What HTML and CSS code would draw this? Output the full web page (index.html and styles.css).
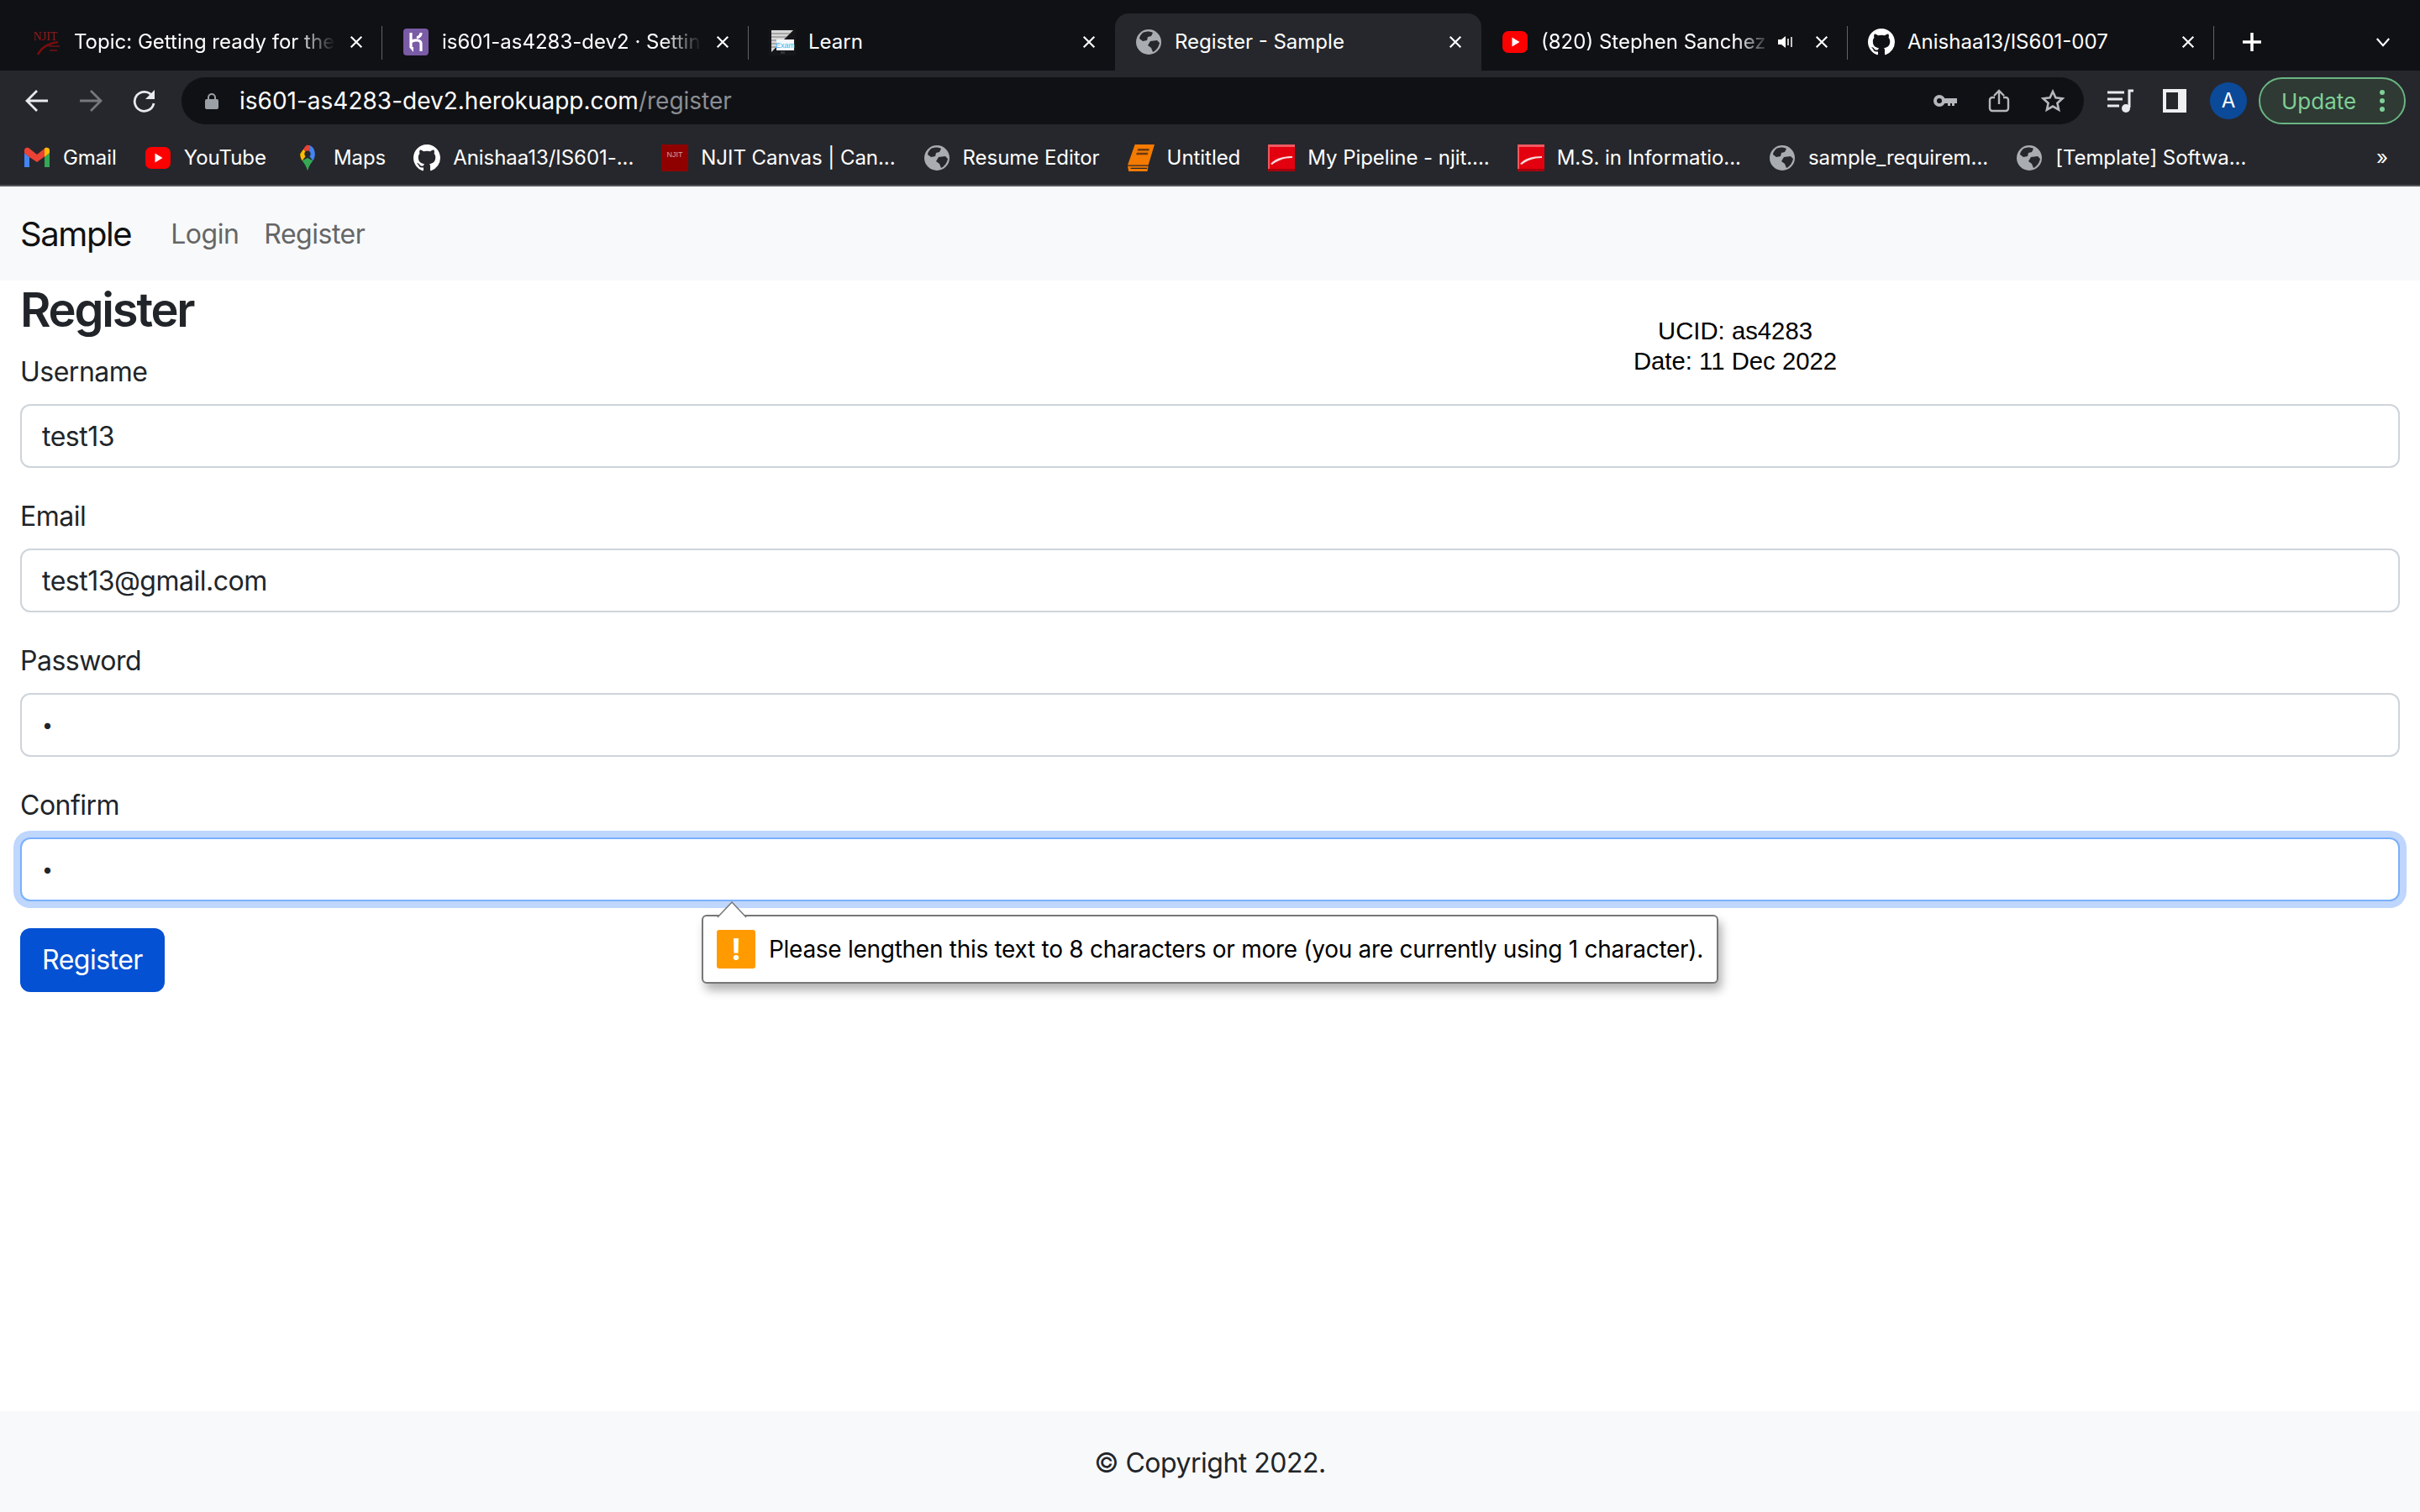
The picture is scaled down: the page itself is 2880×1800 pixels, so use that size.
FILE: index.html
```html
<!DOCTYPE html>
<html lang="en">
<head>
    <meta charset="UTF-8">
    <meta name="viewport" content="width=device-width, initial-scale=1.0">
    <title>Register - Sample</title>
    <link rel="stylesheet" href="styles.css">
</head>
<body>
    <!-- shared icons -->
    <svg class="icon-defs" aria-hidden="true">
        <symbol id="i-github" viewBox="0 0 16 16"><path fill="#fff" d="M8 0C3.58 0 0 3.58 0 8c0 3.54 2.29 6.53 5.47 7.59.4.07.55-.17.55-.38 0-.19-.01-.82-.01-1.49-2.01.37-2.53-.49-2.69-.94-.09-.23-.48-.94-.82-1.13-.28-.15-.68-.52-.01-.53.63-.01 1.08.58 1.23.82.72 1.21 1.87.87 2.33.66.07-.52.28-.87.51-1.07-1.78-.2-3.64-.89-3.64-3.95 0-.87.31-1.59.82-2.15-.08-.2-.36-1.02.08-2.12 0 0 .67-.21 2.2.82.64-.18 1.32-.27 2-.27.68 0 1.36.09 2 .27 1.53-1.04 2.2-.82 2.2-.82.44 1.1.16 1.92.08 2.12.51.56.82 1.27.82 2.15 0 3.07-1.87 3.75-3.65 3.95.29.25.54.73.54 1.48 0 1.07-.01 1.93-.01 2.2 0 .21.15.46.55.38A8.013 8.013 0 0016 8c0-4.42-3.58-8-8-8z"/></symbol>
        <symbol id="i-globe" viewBox="0 0 32 32"><circle cx="16" cy="16" r="15" fill="#a9adb2"/><path fill="#26272c" d="M9 5c4-2 9-2 12 0l-2 4-4 1-1 4-5 1-4-3c0-3 2-5 4-7zM18 15l8-1 3 3c-1 5-4 9-8 11l-2-5-4-3z"/></symbol>
        <symbol id="i-youtube" viewBox="0 0 32 32"><rect x="1" y="3" width="30" height="26" rx="7" fill="#f00"/><path fill="#fff" d="M12.500 10.500l9 5.500-9 5.500z"/></symbol>
        <symbol id="i-pdf" viewBox="0 0 32 32"><rect width="32" height="32" fill="#e3000f"/><rect width="32" height="3" fill="#ee5a60"/><rect width="2" height="32" fill="#ee5a60"/><rect y="29" width="32" height="3" fill="#a8000b"/><path fill="#f8dcdc" d="M3 23c5-6 14-9 26-9v2c-10 0-18 3-24 8z"/></symbol>
        <symbol id="i-close" viewBox="0 0 20 20"><path stroke="#fff" stroke-width="2.400" d="M3 3l14 14M17 3L3 17"/></symbol>
    </svg>

    <!-- browser chrome -->
    <div class="tab-strip">
        <div class="tab">
            <svg class="favicon fav-njit" viewBox="0 0 32 32"><text x="13" y="14" text-anchor="middle" class="njit-mark">NJIT</text><path fill="none" stroke="#7a0d0d" stroke-width="2.500" d="M4 31C9 22 16 18 28 16"/><path stroke="#5c1010" stroke-width="2" d="M17 21h13M18 26h9"/></svg>
            <span class="tab-title fade">Topic: Getting ready for the</span>
            <svg class="tab-close"><use href="#i-close"/></svg>
        </div>
        <div class="tab">
            <svg class="favicon" viewBox="0 0 32 32"><rect width="30" height="32" x="1" rx="4" fill="#7a5ba6"/><path fill="none" stroke="#fff" stroke-width="3.200" d="M10 5v17M10 16c4-3 12-3 12 2v9M22 5c0 3-2 5-5 6"/><path fill="#fff" d="M8 22h5v6z"/></svg>
            <span class="tab-title fade">is601-as4283-dev2 · Settin</span>
            <svg class="tab-close"><use href="#i-close"/></svg>
        </div>
        <div class="tab no-divider">
            <svg class="favicon" viewBox="0 0 32 32"><rect x="0" y="0" width="32" height="32" fill="#15161a"/><path fill="#d8d8d8" d="M3 2h26L3 28z"/><path stroke="#777" stroke-width="1.200" d="M3 6h22M3 10h18M3 14h14M3 18h10M3 22h6"/><rect x="9" y="13" width="21" height="13" fill="#f4f8fb"/><text x="19.500" y="23" text-anchor="middle" class="exam-mark">Exam</text><rect x="14" y="27" width="5" height="3" fill="#333"/></svg>
            <span class="tab-title">Learn</span>
            <svg class="tab-close"><use href="#i-close"/></svg>
        </div>
        <div class="tab active">
            <svg class="favicon"><use href="#i-globe"/></svg>
            <span class="tab-title">Register - Sample</span>
            <svg class="tab-close"><use href="#i-close"/></svg>
        </div>
        <div class="tab">
            <svg class="favicon"><use href="#i-youtube"/></svg>
            <span class="tab-title fade">(820) Stephen Sanchez</span>
            <svg class="tab-audio" viewBox="0 0 20 20"><path fill="#fff" d="M1 7h4l5-4v14l-5-4H1z"/><path fill="none" stroke="#fff" stroke-width="1.500" d="M13 6v8M17 4v12"/></svg>
            <svg class="tab-close"><use href="#i-close"/></svg>
        </div>
        <div class="tab">
            <svg class="favicon"><use href="#i-github"/></svg>
            <span class="tab-title">Anishaa13/IS601-007</span>
            <svg class="tab-close"><use href="#i-close"/></svg>
        </div>
        <svg class="new-tab" viewBox="0 0 24 24"><path stroke="#fff" stroke-width="3.500" d="M12 1v22M1 12h22"/></svg>
        <svg class="tab-search" viewBox="0 0 20 12"><path fill="none" stroke="#fff" stroke-width="2.400" d="M2 1l8 9 8-9"/></svg>
    </div>

    <div class="toolbar">
        <svg class="nav-icon" viewBox="0 0 28 28"><path fill="none" stroke="#e8eaed" stroke-width="2.800" d="M27 14H3M14 2L2 14l12 12"/></svg>
        <svg class="nav-icon" viewBox="0 0 28 28"><path fill="none" stroke="#76787c" stroke-width="2.800" d="M1 14h24M14 2l12 12-12 12"/></svg>
        <svg class="nav-icon" viewBox="0 0 28 28"><path fill="none" stroke="#e8eaed" stroke-width="2.800" d="M23 8a11.500 11.500 0 1 0 2 9"/><path fill="#e8eaed" d="M26 1v11H15z"/></svg>
        <div class="omnibox">
            <svg class="lock" viewBox="0 0 16 20"><path fill="none" stroke="#9aa0a6" stroke-width="2" d="M4 9V6a4 4 0 0 1 8 0v3"/><rect x="0" y="8" width="16" height="12" rx="2" fill="#9aa0a6"/></svg>
            <span class="url">is601-as4283-dev2.herokuapp.com<span class="url-path">/register</span></span>
            <div class="omni-actions">
                <svg class="omni-icon" viewBox="0 0 28 28"><circle cx="7" cy="14" r="5" fill="none" stroke="#b4b7bb" stroke-width="4"/><path fill="#b4b7bb" d="M12 11h16v6h-3v3h-3v-3h-2v3h-3v-3h-5z"/></svg>
                <svg class="omni-icon" viewBox="0 0 28 28"><path fill="none" stroke="#b4b7bb" stroke-width="2.400" d="M9 10H6a3 3 0 0 0-3 3v10a3 3 0 0 0 3 3h16a3 3 0 0 0 3-3V13a3 3 0 0 0-3-3h-3M14 18V2M8 8l6-6 6 6"/></svg>
                <svg class="omni-icon" viewBox="0 0 28 28"><path fill="none" stroke="#b4b7bb" stroke-width="2.600" d="M14 3l3.400 7.400 8 .9-6 5.400 1.700 8L14 20.600 6.900 24.700l1.700-8-6-5.400 8-.9z"/></svg>
            </div>
        </div>
        <svg class="queue-icon" viewBox="0 0 32 32"><path fill="none" stroke="#e8eaed" stroke-width="3" d="M1 6h20M1 14h18M1 22h14"/><path fill="none" stroke="#e8eaed" stroke-width="3" d="M27 24V4h5"/><circle cx="23" cy="25" r="5" fill="#e8eaed"/></svg>
        <svg class="panel-icon" viewBox="0 0 28 28"><path fill="#eef0f2" fill-rule="evenodd" d="M0 0h28v28H0zM4 4v20h14V4z"/></svg>
        <div class="avatar">A</div>
        <div class="update-pill">
            <span>Update</span>
            <svg class="update-dots" viewBox="0 0 6 28"><circle cx="3" cy="4" r="3"/><circle cx="3" cy="14" r="3"/><circle cx="3" cy="24" r="3"/></svg>
        </div>
    </div>

    <div class="bookmarks">
        <a class="bookmark"><svg class="bm-icon" viewBox="0 0 32 32"><path fill="#4285f4" d="M1 27V10l6 5v12z"/><path fill="#34a853" d="M25 27V15l6-5v17z"/><path fill="#ea4335" d="M7 15L1 10V7c0-3 3-4 5-3l10 8 10-8c2-1 5 0 5 3v3l-15 11z"/><path fill="#fbbc04" d="M25 15l6-5V7c0-3-3-4-5-3l-1 1z"/></svg>Gmail</a>
        <a class="bookmark"><svg class="bm-icon"><use href="#i-youtube"/></svg>YouTube</a>
        <a class="bookmark"><svg class="bm-icon" viewBox="0 0 32 40"><path fill="#34a853" d="M16 39c-2-7-5-11-8-15l8-4 8 4c-3 4-6 8-8 15z"/><path fill="#fbbc04" d="M5 14c0 4 1 7 3 10l8-10-6-7z"/><path fill="#4285f4" d="M16 1c5 0 11 4 11 13 0 4-1 7-3 10l-8-10 4-8z"/><path fill="#ea4335" d="M10 7c2-4 4-6 6-6 3 0 4 2 4 5l-4 8z"/><circle cx="16" cy="14" r="4.500" fill="#26272c"/></svg>Maps</a>
        <a class="bookmark"><svg class="bm-icon"><use href="#i-github"/></svg>Anishaa13/IS601-...</a>
        <a class="bookmark"><svg class="bm-icon" viewBox="0 0 32 32"><rect width="32" height="32" fill="#8f0000"/><text x="16" y="15" text-anchor="middle" class="njit-small">NJIT</text></svg>NJIT Canvas | Can...</a>
        <a class="bookmark"><svg class="bm-icon"><use href="#i-globe"/></svg>Resume Editor</a>
        <a class="bookmark"><svg class="bm-icon" viewBox="0 0 26 26"><path fill="#f47a00" d="M7 0h19l-6 20H0z"/><path fill="#6b3a10" d="M10 4h11l-.6 2H9.400zM8.800 8h11l-.6 2h-11z"/><path fill="#f47a00" d="M0 21h20l-1 5H1z"/><path fill="#26272c" d="M3 22.500h16l-.3 1H3z"/></svg>Untitled</a>
        <a class="bookmark"><svg class="bm-icon"><use href="#i-pdf"/></svg>My Pipeline - njit....</a>
        <a class="bookmark"><svg class="bm-icon"><use href="#i-pdf"/></svg>M.S. in Informatio...</a>
        <a class="bookmark"><svg class="bm-icon"><use href="#i-globe"/></svg>sample_requirem...</a>
        <a class="bookmark"><svg class="bm-icon"><use href="#i-globe"/></svg>[Template] Softwa...</a>
        <span class="bm-more">»</span>
    </div>

    <!-- the page -->
    <nav class="navbar">
        <a class="brand">Sample</a>
        <a class="nav-link">Login</a>
        <a class="nav-link">Register</a>
    </nav>

    <main class="content">
        <h1>Register</h1>
        <div class="ucid">UCID: as4283<br>Date: 11 Dec 2022</div>
        <form class="reg-form">
            <div class="field">
                <label for="username">Username</label>
                <input id="username" type="text" value="test13">
            </div>
            <div class="field">
                <label for="email">Email</label>
                <input id="email" type="text" value="test13@gmail.com">
            </div>
            <div class="field">
                <label for="pw">Password</label>
                <input id="pw" class="pw" type="password" value="a">
            </div>
            <div class="field">
                <label for="confirm">Confirm</label>
                <input id="confirm" class="pw focused" type="password" value="a">
            </div>
            <button type="button" class="btn-primary">Register</button>
        </form>

        <!-- validation bubble -->
        <div class="bubble">
            <svg class="bubble-arrow" viewBox="0 0 36 20"><path fill="#fff" stroke="#777" stroke-width="1.500" d="M1 19L18 1l17 18"/></svg>
            <span class="bubble-icon">!</span>
            <span class="bubble-text">Please lengthen this text to 8 characters or more (you are currently using 1 character).</span>
        </div>
    </main>

    <footer class="footer">© Copyright 2022.</footer>
</body>
</html>
```
FILE: styles.css
```css
* {
    box-sizing: border-box;
}
html, body {
    margin: 0;
    height: 100%;
}
body {
    display: flex;
    flex-direction: column;
    height: 1800px;
    overflow: hidden;
    font-family: Inter, "Liberation Sans", sans-serif;
    font-size: 32px;
    line-height: 1.5;
    color: #212529;
    background-color: #fff;
}
.icon-defs {
    display: none;
}

/* tab strip */
.tab-strip {
    display: flex;
    align-items: stretch;
    height: 84px;
    padding: 16px 0 0 19px;
    background-color: #101115;
    color: #fff;
    font-size: 24px;
}
.tab {
    position: relative;
    display: flex;
    align-items: center;
    width: 436px;
    padding: 0 24px;
}
.tab::after {
    content: "";
    position: absolute;
    right: 0;
    top: 15px;
    height: 40px;
    width: 1px;
    background-color: #5f6368;
}
.tab.no-divider::after, .tab.active::after {
    display: none;
}
.tab.active {
    background-color: #26272c;
    border-radius: 16px 16px 0 0;
}
.favicon {
    flex: none;
    width: 32px;
    height: 32px;
    margin-right: 15px;
}
.fav-njit {
    margin-left: -2px;
}
.tab-title {
    flex: 1;
    min-width: 0;
    white-space: nowrap;
    overflow: hidden;
}
.tab-title.fade {
    -webkit-mask-image: linear-gradient(to right, #000 85%, transparent 100%);
    mask-image: linear-gradient(to right, #000 85%, transparent 100%);
}
.tab-audio {
    flex: none;
    width: 20px;
    height: 20px;
    margin: 0 8px;
}
.tab-close {
    flex: none;
    width: 18px;
    height: 18px;
    margin: 0 -2px 0 16px;
}
.njit-mark {
    font-family: "Liberation Serif", serif;
    font-size: 14px;
    fill: #8f1a1a;
}
.exam-mark {
    font-family: "Liberation Sans", sans-serif;
    font-size: 9px;
    fill: #3db4ee;
}
.new-tab {
    width: 24px;
    height: 24px;
    margin: 22px 0 0 33px;
}
.tab-search {
    width: 18px;
    height: 11px;
    margin: 29px 0 0 135px;
}

/* toolbar */
.toolbar {
    display: flex;
    align-items: center;
    height: 72px;
    padding: 0 17px 0 30px;
    background-color: #26272c;
}
.nav-icon {
    flex: none;
    width: 28px;
    height: 28px;
    margin-right: 36px;
}
.omnibox {
    display: flex;
    align-items: center;
    width: 2264px;
    height: 56px;
    margin-left: -6px;
    padding: 0 23px 0 28px;
    border-radius: 28px;
    background-color: #101115;
    color: #fff;
    font-size: 28px;
}
.lock {
    flex: none;
    width: 16px;
    height: 20px;
    margin-right: 25px;
}
.url-path {
    color: #8b8e93;
}
.omni-actions {
    display: flex;
    align-items: center;
    gap: 36px;
    margin-left: auto;
}
.omni-icon {
    width: 28px;
    height: 28px;
}
.queue-icon {
    flex: none;
    width: 32px;
    height: 32px;
    margin-left: 27px;
}
.panel-icon {
    flex: none;
    width: 28px;
    height: 28px;
    margin-left: 35px;
}
.avatar {
    flex: none;
    width: 44px;
    height: 44px;
    margin-left: 28px;
    border-radius: 50%;
    background-color: #0b4a99;
    color: #fff;
    font-size: 24px;
    line-height: 44px;
    text-align: center;
}
.update-pill {
    display: flex;
    align-items: center;
    flex: none;
    width: 175px;
    height: 56px;
    margin-left: 14px;
    padding-left: 25px;
    border: 2px solid #6ab583;
    border-radius: 28px;
    background-color: #2e3a33;
    color: #7fcf98;
    font-size: 26px;
}
.update-dots {
    width: 6px;
    height: 28px;
    margin-left: 28px;
    fill: #7fcf98;
}

/* bookmarks */
.bookmarks {
    display: flex;
    align-items: center;
    gap: 33px;
    height: 66px;
    padding: 0 0 0 28px;
    background-color: #26272c;
    border-bottom: 2px solid #55565a;
    color: #fff;
    font-size: 24px;
    letter-spacing: -0.05px;
}
.bookmark {
    display: flex;
    align-items: center;
    gap: 15px;
    white-space: nowrap;
}
.bm-icon {
    flex: none;
    width: 32px;
    height: 32px;
}
.njit-small {
    font-family: "Liberation Sans", sans-serif;
    font-size: 9px;
    fill: #d8a0a0;
}
.bm-more {
    margin-left: auto;
    margin-right: 38px;
}

/* navbar */
.navbar {
    display: flex;
    align-items: center;
    height: 112px;
    padding: 2px 24px 0;
    background-color: #f8f9fa;
    letter-spacing: -0.5px;
}
.brand {
    margin-right: 32px;
    font-size: 40px;
    letter-spacing: -1.4px;
    color: #111;
}
.nav-link {
    padding: 0 15px;
    color: #666;
}

/* content */
.content {
    position: relative;
    flex: 1;
    padding: 0 24px;
    letter-spacing: -0.5px;
}
h1 {
    margin: 0 0 14px;
    padding-top: 1px;
    font-size: 56px;
    font-weight: 600;
    line-height: 68px;
    letter-spacing: -2.2px;
}
.ucid {
    position: absolute;
    left: 1865px;
    top: 42px;
    width: 400px;
    font-family: "Liberation Sans", sans-serif;
    font-size: 29.3px;
    line-height: 36px;
    letter-spacing: 0;
    text-align: center;
    color: #000;
}
.field {
    margin-bottom: 32px;
}
label {
    display: block;
    margin-bottom: 14px;
    padding-top: 2px;
}
input {
    display: block;
    width: 100%;
    height: 76px;
    padding: 12px 24px;
    border: 2px solid #ced4da;
    border-radius: 12px;
    font: inherit;
    letter-spacing: inherit;
    color: #212529;
    background-color: #fff;
    outline: none;
}
input.pw {
    font-size: 23px;
}
input.focused {
    border-color: #7ab0fb;
    box-shadow: 0 0 0 8px #bfd6fd;
}
.btn-primary {
    display: block;
    height: 76px;
    padding: 0 26px;
    border: none;
    border-radius: 12px;
    background-color: #0451d3;
    color: #fff;
    font: inherit;
    letter-spacing: inherit;
}

/* validation bubble */
.bubble {
    position: absolute;
    left: 835px;
    top: 755px;
    display: flex;
    align-items: center;
    gap: 16px;
    width: 1210px;
    height: 82px;
    padding: 0 16px;
    border: 2px solid #777;
    border-radius: 6px;
    background-color: #fff;
    box-shadow: 4px 8px 12px rgba(0, 0, 0, 0.3);
    color: #000;
    font-size: 28px;
    letter-spacing: -0.28px;
    white-space: nowrap;
}
.bubble-arrow {
    position: absolute;
    left: 16px;
    top: -18px;
    width: 36px;
    height: 20px;
}
.bubble-icon {
    flex: none;
    width: 46px;
    height: 46px;
    border-radius: 3px;
    background-color: #ff9a00;
    color: #fff;
    font-size: 36px;
    font-weight: 700;
    line-height: 46px;
    text-align: center;
}

/* footer */
.footer {
    height: 120px;
    padding-top: 2px;
    background-color: #f8f9fa;
    letter-spacing: -0.5px;
    line-height: 120px;
    text-align: center;
}
```
